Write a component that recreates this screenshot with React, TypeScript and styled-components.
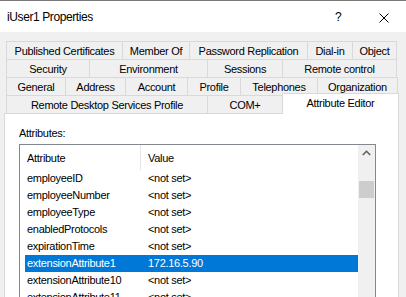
import React from 'react';
import styled, { createGlobalStyle } from 'styled-components';

const GlobalStyle = createGlobalStyle`
  html, body {
    margin: 0;
    padding: 0;
    background: #f0f0f0;
  }
  * {
    box-sizing: border-box;
  }
`;

const tabRows: [string, number][][] = [
  [
    ['Published Certificates', 116],
    ['Member Of', 67],
    ['Password Replication', 118],
    ['Dial-in', 45],
    ['Object', 45],
  ],
  [
    ['Security', 83],
    ['Environment', 118],
    ['Sessions', 75],
    ['Remote control', 115],
  ],
  [
    ['General', 59],
    ['Address', 60],
    ['Account', 62],
    ['Profile', 53],
    ['Telephones', 77],
    ['Organization', 81],
  ],
];

const attributes = [
  { name: 'employeeID', value: '<not set>' },
  { name: 'employeeNumber', value: '<not set>' },
  { name: 'employeeType', value: '<not set>' },
  { name: 'enabledProtocols', value: '<not set>' },
  { name: 'expirationTime', value: '<not set>' },
  { name: 'extensionAttribute1', value: '172.16.5.90', selected: true },
  { name: 'extensionAttribute10', value: '<not set>' },
  { name: 'extensionAttribute11', value: '<not set>' },
];

const App = () => {
  return (
    <Window>
      <GlobalStyle />
      <TitleBar>
        <Title>iUser1 Properties</Title>
        <HelpButton>?</HelpButton>
        <CloseButton>
          <svg width="10" height="10" viewBox="0 0 10 10">
            <path d="M0.5 0.5 L9.5 9.5 M9.5 0.5 L0.5 9.5" stroke="#000" strokeWidth="1" fill="none" />
          </svg>
        </CloseButton>
      </TitleBar>
      <Body>
        <TabStrip>
          {tabRows.map((row, i) => (
            <TabRow key={i}>
              {row.map(([label, w]) => (
                <Tab key={label} $w={w}>
                  {label}
                </Tab>
              ))}
            </TabRow>
          ))}
          <TabRow>
            <Tab $w={201}>Remote Desktop Services Profile</Tab>
            <Tab $w={75}>COM+</Tab>
            <Tab $w={117} $active>
              Attribute Editor
            </Tab>
          </TabRow>
        </TabStrip>
        <Panel>
          <Label>Attributes:</Label>
          <ListView>
            <ListContent>
              <Header>
                <HeaderCell $w={121}>Attribute</HeaderCell>
                <HeaderCell>Value</HeaderCell>
              </Header>
              {attributes.map((a) => (
                <Row key={a.name} $selected={a.selected}>
                  <Cell>{a.name}</Cell>
                  <Cell>{a.value}</Cell>
                </Row>
              ))}
            </ListContent>
            <ScrollBar>
              <ScrollArrow>
                <svg width="9" height="6" viewBox="0 0 9 6">
                  <path d="M0.8 5 L4.5 1.3 L8.2 5" stroke="#606060" strokeWidth="1.6" fill="none" />
                </svg>
              </ScrollArrow>
              <ScrollThumb />
            </ScrollBar>
          </ListView>
        </Panel>
      </Body>
    </Window>
  );
};

export default App;

const Window = styled.div`
  width: 406px;
  height: 297px;
  overflow: hidden;
  background: #f0f0f0;
  font-family: 'Liberation Sans', Arial, sans-serif;
  color: #000;
`;

const TitleBar = styled.div`
  display: flex;
  align-items: center;
  height: 32px;
  background: #fff;
  border-top: 1px solid #7a7a7a;
  padding-left: 7px;
`;

const Title = styled.div`
  flex: 1;
  font-size: 12px;
  letter-spacing: -0.4px;
  margin-top: 1px;
`;

const HelpButton = styled.div`
  font-size: 12px;
  width: 7px;
  margin-right: 37px;
  margin-top: 1px;
`;

const CloseButton = styled.div`
  display: flex;
  width: 10px;
  height: 10px;
  margin-right: 17px;
  margin-top: 2px;
`;

const Body = styled.div`
  padding-top: 9px;
`;

const TabStrip = styled.div`
  display: flex;
  flex-direction: column;
  margin-left: 6px;
`;

const TabRow = styled.div`
  display: flex;
  height: 18px;
`;

const Tab = styled.div<{ $w: number; $active?: boolean }>`
  flex: none;
  width: ${(p) => p.$w}px;
  height: ${(p) => (p.$active ? 21 : 18)}px;
  margin-top: ${(p) => (p.$active ? -2 : 0)}px;
  position: ${(p) => (p.$active ? 'relative' : 'static')};
  z-index: ${(p) => (p.$active ? 1 : 0)};
  display: flex;
  align-items: center;
  justify-content: center;
  padding-bottom: ${(p) => (p.$active ? 2 : 0)}px;
  background: ${(p) => (p.$active ? '#fff' : '#f0f0f0')};
  border-top: 1px solid #d9d9d9;
  border-left: 1px solid #d9d9d9;
  font-size: 11px;
  letter-spacing: -0.3px;
  white-space: nowrap;

  &:last-child {
    border-right: 1px solid #d9d9d9;
  }
`;

const Panel = styled.div`
  margin-left: 4px;
  width: 395px;
  height: 200px;
  background: #fff;
  border: 1px solid #d9d9d9;
  padding: 13px 0 0 14px;
`;

const Label = styled.div`
  font-size: 11px;
  line-height: 13px;
  letter-spacing: -0.3px;
`;

const ListView = styled.div`
  display: flex;
  margin-top: 4px;
  width: 357px;
  height: 170px;
  border: 1px solid #828790;
  background: #fff;
`;

const ListContent = styled.div`
  flex: 1;
  display: flex;
  flex-direction: column;
`;

const Header = styled.div`
  display: flex;
  height: 25px;
  font-size: 11px;
  letter-spacing: -0.3px;
`;

const HeaderCell = styled.div<{ $w?: number }>`
  display: flex;
  align-items: center;
  padding-left: 7px;
  width: ${(p) => (p.$w ? `${p.$w}px` : 'auto')};
  flex: ${(p) => (p.$w ? 'none' : '1')};
  border-right: ${(p) => (p.$w ? '1px solid #e5e5e5' : 'none')};
`;

const Row = styled.div<{ $selected?: boolean }>`
  display: grid;
  grid-template-columns: 121px 1fr;
  height: 17px;
  line-height: 17px;
  margin-left: 5px;
  padding-left: 2px;
  font-size: 11px;
  letter-spacing: -0.3px;
  white-space: nowrap;
  background: ${(p) => (p.$selected ? '#0078d7' : 'transparent')};
  color: ${(p) => (p.$selected ? '#fff' : '#000')};
`;

const Cell = styled.div`
  overflow: hidden;
`;

const ScrollBar = styled.div`
  display: flex;
  flex-direction: column;
  align-items: center;
  width: 17px;
  background: #f0f0f0;
`;

const ScrollArrow = styled.div`
  display: flex;
  align-items: center;
  justify-content: center;
  width: 17px;
  height: 17px;
  padding-bottom: 2px;
`;

const ScrollThumb = styled.div`
  width: 15px;
  height: 17px;
  margin-top: 19px;
  background: #cdcdcd;
`;
